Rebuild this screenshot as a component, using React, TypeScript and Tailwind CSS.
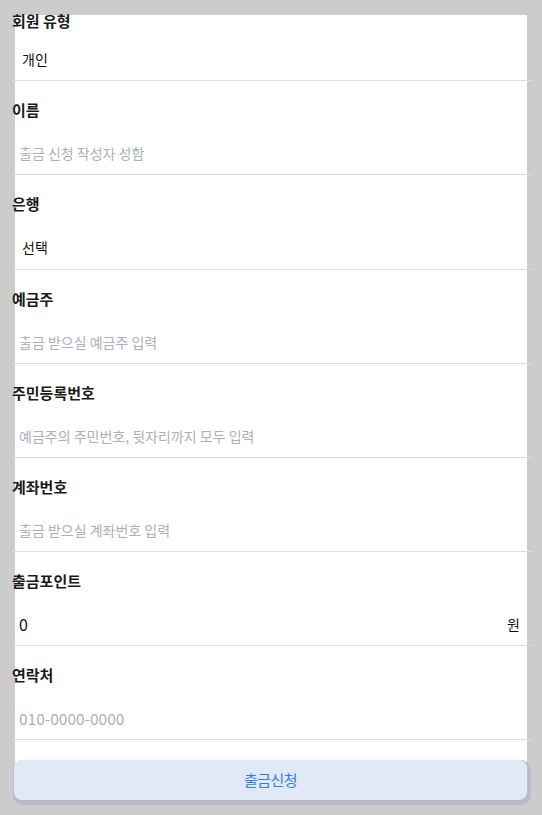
import React from 'react';

type Field = {
    label: string;
    kind: 'select' | 'input' | 'amount';
    value?: string;
    placeholder?: string;
    numeric?: boolean;
};

const fields: Field[] = [
    { label: '이름', kind: 'input', placeholder: '출금 신청 작성자 성함' },
    { label: '은행', kind: 'select', value: '선택' },
    { label: '예금주', kind: 'input', placeholder: '출금 받으실 예금주 입력' },
    { label: '주민등록번호', kind: 'input', placeholder: '예금주의 주민번호, 뒷자리까지 모두 입력' },
    { label: '계좌번호', kind: 'input', placeholder: '출금 받으실 계좌번호 입력' },
    { label: '출금포인트', kind: 'amount', value: '0' },
    { label: '연락처', kind: 'input', placeholder: '010-0000-0000', numeric: true },
];

function FieldBody({ field }: { field: Field }) {
    if (field.kind === 'select') {
        return (
            <div className="flex h-full items-center pb-[1px] pl-[10px] text-[14px] text-[#111]">{field.value}</div>
        );
    }
    if (field.kind === 'amount') {
        return (
            <div className="flex h-full items-center">
                <input
                    readOnly
                    value={field.value}
                    className="h-full min-w-0 flex-1 bg-transparent pl-[7px] text-[16px] text-[#111] outline-none"
                />
                <span className="pr-[12px] text-[14px] text-[#111]">원</span>
            </div>
        );
    }
    return (
        <input
            placeholder={field.placeholder}
            className={
                field.numeric
                    ? 'h-full w-full bg-transparent pl-[7px] text-[15.5px] outline-none placeholder:text-[#a9b0bb]'
                    : 'h-full w-full bg-transparent pl-[7px] text-[14px] outline-none placeholder:text-[#a9b0bb]'
            }
        />
    );
}

export default function App() {
    return (
        <div className="min-h-screen bg-[#cccccc] px-[15px] pt-[15px] font-['Noto_Sans_CJK_KR',sans-serif]">
            <div className="flex flex-col bg-white">
                <div className="ml-[-3px] mr-[-5px] flex flex-col">
                    {/* 회원 유형 - first row sits tight against the top */}
                    <div className="flex flex-col border-b border-[#dcdcdc]">
                        <div className="-mt-[4px] h-5 text-[15px] font-bold leading-5 text-[#1a1a1a]">
                            회원 유형
                        </div>
                        <div className="mt-[8px] h-[41px]">
                            <div className="flex h-full items-center pl-[10px] text-[14px] text-[#111]">개인</div>
                        </div>
                    </div>

                    {fields.map((f) => (
                        <div key={f.label} className="flex flex-col border-b border-[#dcdcdc] pt-[19px]">
                            <div className="h-5 text-[15px] font-bold leading-5 text-[#1a1a1a]">{f.label}</div>
                            <div className={f.kind === 'select' ? 'mt-[12px] h-[43px]' : 'mt-[12px] h-[42px]'}>
                                <FieldBody field={f} />
                            </div>
                        </div>
                    ))}

                    <div className="mt-[20px] pl-[2px] pr-[5px]">
                        <button className="flex h-10 w-full items-center justify-center rounded-[8px] bg-[#e0e9f5] text-[15px] tracking-[-0.5px] text-[#3a7bf0] shadow-[1.5px_2.5px_1px_2.5px_#b7bcc9]">
                            출금신청
                        </button>
                    </div>
                </div>
            </div>
        </div>
    );
}
